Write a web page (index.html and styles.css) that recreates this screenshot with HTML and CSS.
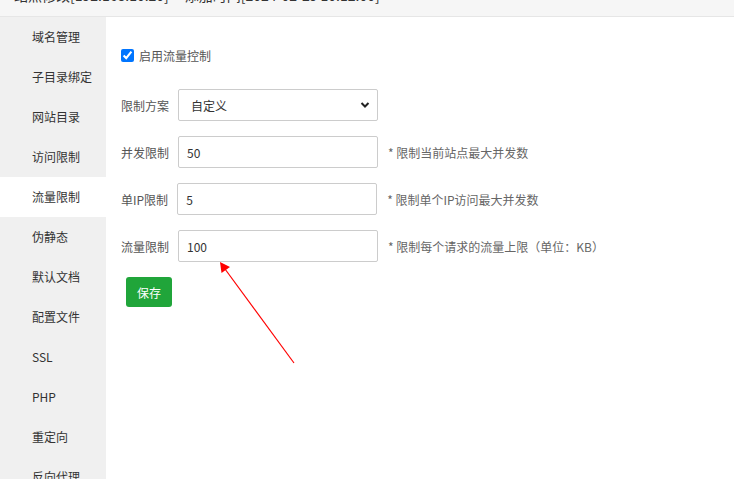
FILE: index.html
```html
<!DOCTYPE html>
<html>
<head>
<meta charset="utf-8">
<link rel="stylesheet" href="styles.css">
</head>
<body>
<div class="header"><span class="title">站点修改[192.168.10.20] -- 添加时间[2024-02-29 10:12:00]</span></div>
<div class="main">
  <ul class="sidebar">
    <li>域名管理</li>
    <li>子目录绑定</li>
    <li>网站目录</li>
    <li>访问限制</li>
    <li class="active">流量限制</li>
    <li>伪静态</li>
    <li>默认文档</li>
    <li>配置文件</li>
    <li>SSL</li>
    <li>PHP</li>
    <li>重定向</li>
    <li>反向代理</li>
  </ul>
  <div class="content">
    <label class="check-row"><input type="checkbox" checked><span>启用流量控制</span></label>
    <div class="row first">
      <span class="label">限制方案</span>
      <div class="select-wrap">
        <select class="field"><option>自定义</option></select>
        <svg class="chev" width="10" height="8" viewBox="0 0 10 8"><path d="M1.5 2 L5 5.5 L8.5 2" fill="none" stroke="#222" stroke-width="2"/></svg>
      </div>
    </div>
    <div class="row">
      <span class="label">并发限制</span>
      <input class="field" type="text" value="50">
      <span class="hint">* 限制当前站点最大并发数</span>
    </div>
    <div class="row">
      <span class="label">单IP限制</span>
      <input class="field" type="text" value="5">
      <span class="hint">* 限制单个IP访问最大并发数</span>
    </div>
    <div class="row">
      <span class="label">流量限制</span>
      <input class="field" type="text" value="100">
      <span class="hint">* 限制每个请求的流量上限（单位：KB）</span>
    </div>
    <button class="save">保存</button>
  </div>
</div>
<svg class="arrow" width="734" height="479" viewBox="0 0 734 479">
  <line x1="294" y1="363" x2="225" y2="269" stroke="#ff0000" stroke-width="1.2"/>
  <polygon points="220,262 221.5,273 230,267" fill="#ff0000"/>
</svg>
</body>
</html>
```
FILE: styles.css
```css
* { box-sizing: border-box; }
html, body {
  margin: 0;
  padding: 0;
  width: 734px;
  height: 479px;
  overflow: hidden;
  background: #fff;
  font-family: "Microsoft YaHei", "Noto Sans CJK SC", sans-serif;
  font-size: 12px;
  color: #333;
}
.header {
  height: 17px;
  background: #f6f6f6;
  border-bottom: 1px solid #e6e6e6;
  overflow: hidden;
  padding-left: 14px;
}
.title {
  display: block;
  font-size: 14px;
  line-height: 16px;
  margin-top: -13px;
  color: #333;
  white-space: nowrap;
}
.main {
  display: flex;
  height: 462px;
}
.sidebar {
  list-style: none;
  margin: 0;
  padding: 0;
  width: 106px;
  flex: none;
  background: #f0f0f0;
}
.sidebar li {
  height: 40px;
  line-height: 40px;
  padding-left: 32px;
  color: #333;
}
.sidebar li.active {
  background: #fff;
}
.content {
  flex: 1;
  padding: 22px 15px 0 15px;
}
.check-row {
  display: flex;
  align-items: center;
  height: 32px;
  color: #555;
}
.check-row input {
  margin: 0 5px 0 0;
  width: 13px;
  height: 13px;
}
.row {
  display: flex;
  align-items: center;
  height: 32px;
  margin-top: 15px;
}
.row.first {
  margin-top: 18px;
}
.label {
  color: #555;
  margin-right: 9px;
}
.field {
  width: 200px;
  height: 32px;
  border: 1px solid #ccc;
  border-radius: 2px;
  padding: 0 8px;
  font-family: inherit;
  font-size: 12px;
  color: #333;
  background: #fff;
  outline: none;
}
.select-wrap {
  position: relative;
}
select.field {
  appearance: none;
  -webkit-appearance: none;
  padding-left: 12px;
}
.chev {
  position: absolute;
  right: 8px;
  top: 12px;
}
.hint {
  margin-left: 10px;
  color: #666;
}
.save {
  margin-top: 15px;
  margin-left: 5px;
  height: 30px;
  width: 46px;
  padding: 0;
  border: none;
  border-radius: 3px;
  background: #20a53a;
  color: #fff;
  font-family: inherit;
  font-size: 12px;
}
.arrow {
  position: absolute;
  left: 0;
  top: 0;
  pointer-events: none;
}
```
